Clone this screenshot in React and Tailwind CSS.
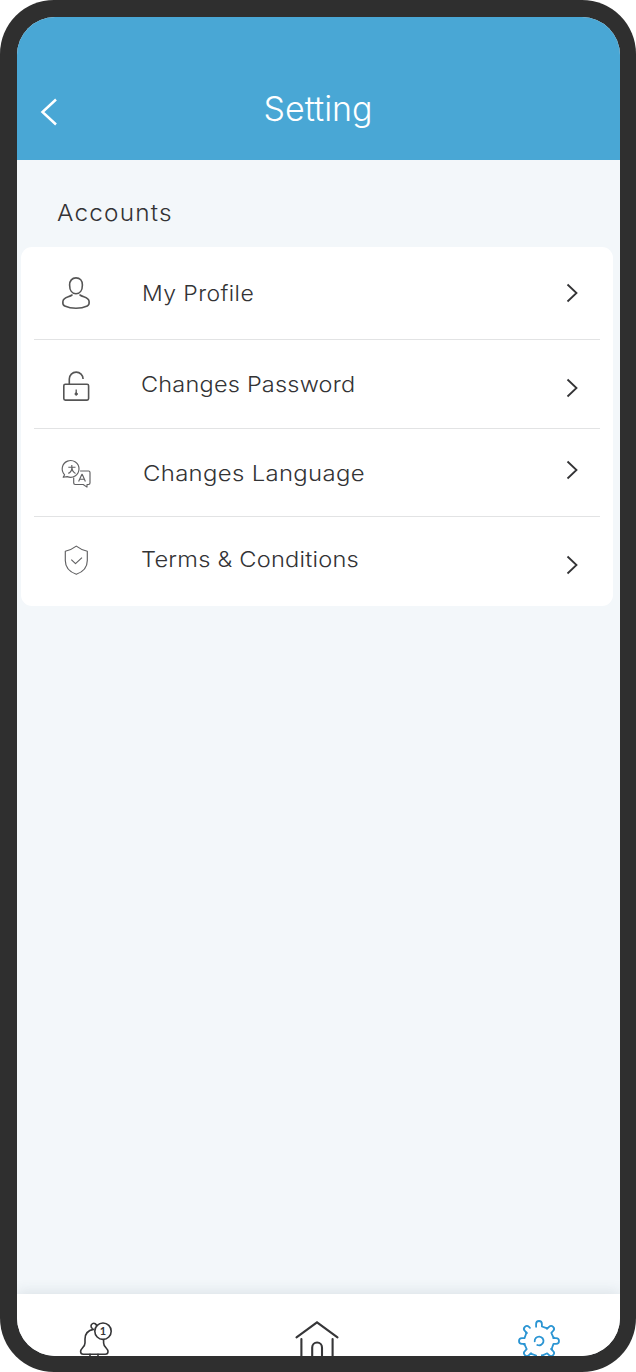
const items = [
  { label: 'My Profile', icon: ProfileIcon, row: 'h-[92px]', text: 'ml-[48px] mt-px tracking-[0.4px] scale-x-[1.045]', arrow: 'mt-px' },
  { label: 'Changes Password', icon: LockIcon, row: 'h-[88px]', text: 'ml-[47px] mt-px tracking-[0.2px] scale-x-[1.068]', arrow: 'mt-[9px]' },
  { label: 'Changes Language', icon: LanguageIcon, row: 'h-[87px]', text: 'ml-[49px] mt-px tracking-[0.3px] scale-x-[1.087]', arrow: '-mt-[5px]' },
  { label: 'Terms & Conditions', icon: ShieldIcon, row: 'h-[89px]', text: 'ml-[47px] -mt-[5px] tracking-[0.2px] scale-x-[1.075]', arrow: 'mt-[8px]' },
]

export default function App() {
  return (
    <div className="h-[1372px] w-[636px] rounded-[54px] bg-[#2f2f2f] p-[16.5px] font-['Inter',sans-serif] text-[#333335]">
      <div className="flex h-full flex-col overflow-hidden rounded-[38px] bg-[#f3f7fa]">
        <header className="grid h-[143px] shrink-0 grid-cols-[80px_1fr_80px] items-start bg-[#49a7d5] text-white">
          <svg className="ml-[22px] mt-[79.5px]" width="20" height="32" viewBox="0 0 20 32" fill="none" stroke="currentColor" strokeWidth="2.5">
            <path d="M17 3.5 3.5 16 17 28.5" />
          </svg>
          <h1 className="mt-[70px] text-center text-[34px] font-light leading-[44px] whitespace-nowrap">Setting</h1>
        </header>

        <main className="flex-1">
          <h2 className="ml-[40.5px] mt-[37px] origin-left scale-x-[1.06] text-[23px] font-light leading-8 tracking-[1.1px]">Accounts</h2>
          <ul className="ml-[4px] mt-[18px] w-[592px] rounded-[11px] bg-white px-[13px]">
            {items.map((item) => (
              <SettingRow key={item.label} item={item} />
            ))}
          </ul>
        </main>

        <nav className="relative flex h-[62px] shrink-0 justify-between bg-white pl-[59px] pr-[57px] pt-[23px] shadow-[0_-3px_12px_rgba(40,70,90,0.1)]">
          <BellIcon />
          <HomeIcon />
          <GearIcon />
        </nav>
      </div>
    </div>
  )
}

function SettingRow({ item }) {
  const Icon = item.icon
  return (
    <li className={`box-content flex items-center border-b border-[#e2e3e4] last:border-b-0 ${item.row}`}>
      <Icon />
      <span className={`origin-left text-[22px] font-light leading-7 whitespace-nowrap ${item.text}`}>{item.label}</span>
      <svg className={`ml-auto mr-[20px] ${item.arrow}`} width="16" height="22" viewBox="0 0 16 22" fill="none" stroke="currentColor" strokeWidth="1.8">
        <path d="m3.5 2.5 9 8.5-9 8.5" />
      </svg>
    </li>
  )
}

function ProfileIcon() {
  return (
    <svg className="ml-[24px]" width="36" height="36" viewBox="0 0 36 36" fill="none" stroke="#555" strokeWidth="1.6" strokeLinecap="round">
      <path d="M18 2.9c4 0 6.4 2.9 6.4 7.1 0 5.1-2.5 8.8-6.4 8.8s-6.4-3.7-6.4-8.8c0-4.2 2.4-7.1 6.4-7.1Z" />
      <path d="M14 20c-2.9 2.3-8.4 1.8-9.1 6.3-.4 2.7-.2 3.7 1.8 4.6 6.7 3.1 15.9 3.1 22.6 0 2-.9 2.1-1.9 1.8-4.6-.6-4.4-6-4-9.1-6.3" />
    </svg>
  )
}

function LockIcon() {
  return (
    <svg className="ml-[24px] mt-[4px]" width="36" height="36" viewBox="0 0 36 36" fill="none" stroke="#555" strokeWidth="1.6">
      <rect x="5.8" y="16.3" width="24.8" height="15.8" rx="1.5" />
      <path d="M11.3 16v-5a6.9 6.9 0 0 1 13.8 0" />
      <path d="M18.2 21.5v4" strokeWidth="1.3" />
      <circle cx="18.2" cy="26" r="1.2" fill="#555" strokeWidth="1" />
    </svg>
  )
}

function LanguageIcon() {
  return (
    <svg className="ml-[24px] mt-[4px]" width="36" height="36" viewBox="-0.6 -0.3 36 36" fill="none" stroke="#606062" strokeWidth="1.15" strokeLinejoin="round">
      <path d="M6 18.5 4.6 21l4-.7a8.4 8.4 0 1 0-2.6-1.8Z" />
      <path d="M13.2 8.7v2.2m-3.5 0h7.2m-3.6 0c0 3.2-1.5 5.3-3.6 6.2m3.6-6.2c.2 3.2 1.5 5.2 3.6 6.2" />
      <path d="M21.5 14.7H30c.9 0 1.4.5 1.4 1.4v10.7c0 .9-.5 1.4-1.4 1.4h-1.6v2.6l-3.8-2.6h-8.1c-.9 0-1.4-.5-1.4-1.4v-5.5" />
      <path d="m20 25.2 3.2-7.1h.5l3.1 7.1m-5.8-2.3h4.8" />
    </svg>
  )
}

function ShieldIcon() {
  return (
    <svg className="ml-[24px] -mt-[3px]" width="36" height="36" viewBox="0 0 36 36" fill="none" stroke="#606062" strokeWidth="1.15" strokeLinejoin="round">
      <path d="M18.3 4.1c3.4 2.6 6.9 4.2 11 5.2v9.2c0 7.1-4.8 11.6-11 13.8-6.2-2.2-11-6.7-11-13.8V9.3c4.1-1 7.6-2.6 11-5.2Z" />
      <path d="m13.3 17.7 4.2 4 6.5-6.1" />
    </svg>
  )
}

function BellIcon() {
  return (
    <svg width="44" height="44" viewBox="0 0 44 44" fill="none" stroke="#363638" strokeWidth="1.6" strokeLinecap="round">
      <path d="M16.2 11.4a2.8 2.8 0 1 1 4.4-2.3" />
      <path d="M17.5 12.4c-5.6 1-8.5 5-8.5 9.7v3.8c0 4.3-4.4 5.1-4.4 8.6 0 1.8 1 2.7 2.7 2.7h22c1.8 0 2.7-.9 2.7-2.7 0-3.5-4.4-4.3-4.4-8.6v-2.8" />
      <circle cx="27" cy="14.2" r="8.2" />
      <path d="M14 37.2v4m8-4v4" />
      <text x="27" y="18.2" fill="#363638" stroke="none" textAnchor="middle" className="font-['Lato',sans-serif] text-[11px] font-bold">1</text>
    </svg>
  )
}

function HomeIcon() {
  return (
    <svg width="48" height="44" viewBox="0 0 48 44" fill="none" stroke="#363638" strokeWidth="2.1" strokeLinecap="round">
      <path d="M3.5 20.3 24 5.3l20.5 15" />
      <path d="M8.4 22v22M39.6 22v22M19.2 44V30.4a4.9 4.9 0 0 1 9.8 0V44" />
    </svg>
  )
}

function GearIcon() {
  const teeth = [0, 45, 90, 135, 180, 225, 270]
  return (
    <svg width="48" height="48" viewBox="-24 -24 48 48" fill="none" stroke="#2b95d3" strokeWidth="1.8" strokeLinecap="round" strokeLinejoin="round">
      {teeth.map((angle) => (
        <path key={angle} d="M-2.9-14.2v-2.9a2.9 2.9 0 0 1 5.8 0v2.6l4.6 1.7.8-.3" transform={`rotate(${angle})`} />
      ))}
      {/* last tooth stays open towards the top one */}
      <path d="M-2.9-14.2v-2.9a2.9 2.9 0 0 1 5.8 0v1.4" transform="rotate(315)" />
      <path d="M-4.3.4A4.4 4.4 0 1 1-1.7 4" />
    </svg>
  )
}
